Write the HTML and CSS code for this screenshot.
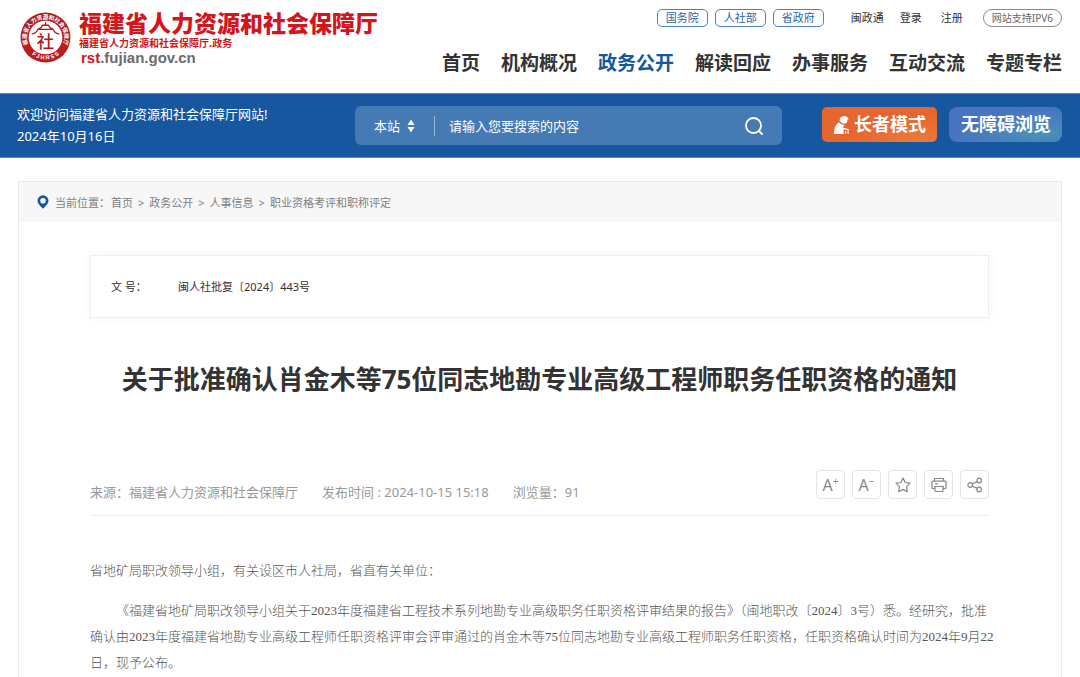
FILE: index.html
```html
<!DOCTYPE html>
<html lang="zh-CN">
<head>
<meta charset="utf-8">
<meta name="viewport" content="width=device-width, initial-scale=1">
<title>福建省人力资源和社会保障厅</title>
<link rel="stylesheet" href="styles.css">
</head>
<body>
<header class="site-header">
  <a class="brand" href="#">
    <svg class="emblem" viewBox="0 0 100 100" aria-hidden="true">
      <defs>
        <radialGradient id="seal" cx="50%" cy="70%" r="70%">
          <stop offset="0" stop-color="#d0141b"/>
          <stop offset="1" stop-color="#a3262a"/>
        </radialGradient>
        <path id="arc-top" d="M14.500 61A37 37 0 1 1 85.500 61"/>
        <path id="arc-bottom" d="M9 63A43 43 0 0 0 91 63"/>
      </defs>
      <circle cx="50" cy="50" r="49" fill="url(#seal)"/>
      <circle cx="50" cy="50" r="33" fill="#fff"/>
      <text class="seal-cn"><textPath href="#arc-top" startOffset="50%" text-anchor="middle">福建省人力资源和社会保障厅</textPath></text>
      <text class="seal-en"><textPath href="#arc-bottom" startOffset="50%" text-anchor="middle">F J H R S S</textPath></text>
      <g fill="none" stroke="#b5161c" stroke-width="2.500" stroke-linecap="round" stroke-linejoin="round">
        <path d="M24 43Q32 42 35 34H65Q68 42 76 43M35 34Q43 31 44 26H56Q57 31 65 34M50 21V26"/>
      </g>
      <text class="seal-mark" x="50" y="71" text-anchor="middle">社</text>
    </svg>
    <span class="brand-text">
      <span class="brand-name">福建省人力资源和社会保障厅</span>
      <span class="brand-sub">福建省人力资源和社会保障厅.政务</span>
      <span class="brand-url"><b>rst</b>.fujian.gov.cn</span>
    </span>
  </a>
  <div class="header-right">
    <div class="top-links">
      <div class="pills">
        <a class="pill" href="#">国务院</a>
        <a class="pill" href="#">人社部</a>
        <a class="pill" href="#">省政府</a>
      </div>
      <div class="account">
        <a href="#">闽政通</a>
        <a class="login" href="#">登录</a>
        <a href="#">注册</a>
      </div>
      <a class="ipv6" href="#">网站支持IPV6</a>
    </div>
    <nav class="main-nav">
      <a href="#">首页</a>
      <a href="#">机构概况</a>
      <a class="active" href="#">政务公开</a>
      <a href="#">解读回应</a>
      <a href="#">办事服务</a>
      <a href="#">互动交流</a>
      <a href="#">专题专栏</a>
    </nav>
  </div>
</header>

<div class="band">
  <div class="welcome">
    <div>欢迎访问福建省人力资源和社会保障厅网站!</div>
    <div>2024年10月16日</div>
  </div>
  <form class="search">
    <div class="scope">
      <select aria-label="搜索范围"><option>本站</option></select>
      <svg class="scope-arrows" viewBox="0 0 8 14" aria-hidden="true"><path fill="#fff" d="M4 0.500L7.500 6H0.500ZM4 13.500L0.500 8H7.500Z"/></svg>
    </div>
    <input type="text" placeholder="请输入您要搜索的内容" aria-label="搜索内容">
    <button class="search-go" type="button" aria-label="搜索">
      <svg viewBox="0 0 20 20" aria-hidden="true"><g fill="none" stroke="#fff" stroke-width="1.800" stroke-linecap="round"><circle cx="9.500" cy="9.500" r="7.500"/><path d="M15 15L18 18"/></g></svg>
    </button>
  </form>
  <div class="modes">
    <button class="mode elder" type="button">
      <svg viewBox="0 0 14 17" aria-hidden="true">
        <g fill="#fff"><path d="M5.200 4.500Q5.200 0.300 9.500 0Q12.500 0 13 1.800L14 3L12.500 3.300Q12.800 6.800 9.800 7.300Q7 7.200 5.200 4.500Z"/><path d="M4.500 5.800Q6.500 8.300 9.800 8.600L8.200 10.800L12.500 12L12.300 13.200L9 12.500V17H0Q-0.500 9.500 4.500 5.800Z"/></g>
        <path d="M10.800 16.500V14.500M13.200 17V12.800L11.500 12.500" fill="none" stroke="#fff" stroke-width="1"/>
      </svg>长者模式</button>
    <button class="mode access" type="button">无障碍浏览</button>
  </div>
</div>

<main class="page">
  <nav class="crumbs" aria-label="当前位置">
    <svg viewBox="0 0 12 14" aria-hidden="true"><path fill="#1558a2" fill-rule="evenodd" d="M6 0.300A5.500 5.500 0 0 1 11.500 5.800Q11.500 9 6 13.700Q0.500 9 0.500 5.800A5.500 5.500 0 0 1 6 0.300ZM6 3A2.800 2.800 0 1 0 6 8.600A2.800 2.800 0 1 0 6 3Z"/></svg>
    <span class="crumb-label">当前位置：</span>
    <a href="#">首页</a><span>&gt;</span><a href="#">政务公开</a><span>&gt;</span><a href="#">人事信息</a><span>&gt;</span><a href="#">职业资格考评和职称评定</a>
  </nav>
  <article class="article">
    <dl class="doc-no">
      <dt>文 号：</dt>
      <dd>闽人社批复〔2024〕443号</dd>
    </dl>
    <h1>关于批准确认肖金木等75位同志地勘专业高级工程师职务任职资格的通知</h1>
    <div class="meta">
      <div class="meta-text">
        <span>来源：福建省人力资源和社会保障厅</span>
        <span>发布时间 : 2024-10-15 15:18</span>
        <span>浏览量：91</span>
      </div>
      <div class="tools">
        <button type="button" aria-label="放大字号"><span class="letter">A<sup>+</sup></span></button>
        <button type="button" aria-label="缩小字号"><span class="letter">A<sup>−</sup></span></button>
        <button type="button" aria-label="收藏"><svg viewBox="0 0 16 16"><path d="M8 1L10.200 5.500L15 6.200L11.500 9.700L12.300 14.700L8 12.400L3.700 14.700L4.500 9.700L1 6.200L5.800 5.500Z"/></svg></button>
        <button type="button" aria-label="打印"><svg viewBox="0 0 16 16"><path d="M3.500 4V1.500H12.500V4M3.500 11.500H1.500Q1 11.500 1 11V5Q1 4.200 1.800 4.200H14.200Q15 4.200 15 5V11Q15 11.500 14.500 11.500H12.500M3 9.500H13M4 9.500V13.500Q4 14.500 5 14.500H11Q12 14.500 12 13.500V9.500M4 6.800H7"/></svg></button>
        <button type="button" aria-label="分享"><svg viewBox="0 0 16 16"><circle cx="3.200" cy="8" r="2.300"/><circle cx="12.200" cy="3.500" r="2.300"/><circle cx="12.200" cy="12.500" r="2.300"/><path d="M5.300 7L10.100 4.600M5.300 9L10.100 11.400"/></svg></button>
      </div>
    </div>
    <div class="content">
      <p>省地矿局职改领导小组，有关设区市人社局，省直有关单位：</p>
      <p class="indent">《福建省地矿局职改领导小组关于2023年度福建省工程技术系列地勘专业高级职务任职资格评审结果的报告》（闽地职改〔2024〕3号）悉。经研究，批准确认由2023年度福建省地勘专业高级工程师任职资格评审会评审通过的肖金木等75位同志地勘专业高级工程师职务任职资格，任职资格确认时间为2024年9月22日，现予公布。</p>
    </div>
  </article>
</main>
</body>
</html>
```
FILE: styles.css
```css
* { box-sizing: border-box; }

body {
  margin: 0;
  min-height: 100vh;
  display: flex;
  flex-direction: column;
  background: #fff;
  color: #333;
  font-family: "Noto Sans", "Noto Sans CJK SC", sans-serif;
  font-size: 13px;
}

a { color: inherit; text-decoration: none; }
button, input, select { font: inherit; color: inherit; margin: 0; padding: 0; border: 0; background: none; }
button { cursor: pointer; }
svg { display: block; }

/* Header */
.site-header {
  display: flex;
  justify-content: space-between;
  padding: 8px 18px 0;
  height: 93px;
}
.brand { display: flex; gap: 8px; padding-left: 2px; }
.emblem { width: 51px; height: 51px; margin-top: 4px; }
.seal-cn { font-size: 11px; font-weight: 700; fill: #fff; }
.seal-en { font-family: "Liberation Sans", sans-serif; font-size: 11px; font-weight: 700; fill: #fff; }
.seal-mark { font-size: 34px; font-weight: 500; fill: #b5161c; }
.brand-text { display: flex; flex-direction: column; color: #d2161b; white-space: nowrap; }
.brand-name { font-family: "Noto Sans CJK SC", sans-serif; font-size: 23px; font-weight: 900; line-height: 28px; }
.brand-sub { font-family: "Noto Sans CJK SC", sans-serif; font-size: 10px; font-weight: 700; line-height: 14px; }
.brand-url { padding-left: 2px; font-family: "Liberation Sans", sans-serif; font-size: 15px; font-weight: 700; line-height: 16px; color: #6b6b6b; }
.brand-url b { color: #d2161b; }

.header-right { display: flex; flex-direction: column; align-items: flex-end; padding-top: 1px; }
.top-links { display: flex; align-items: center; font-size: 11px; line-height: 16px; }
.pills { display: flex; gap: 7px; }
.pill { padding: 0 8px; border: 1px solid #4f80b9; border-radius: 5px; color: #2b64a8; }
.account { display: flex; gap: 16px; margin: 0 20px 0 27px; }
.login { margin-right: 3px; }
.ipv6 { padding: 0 8px; border: 1px solid #8a8a8a; border-radius: 9px; font-size: 10px; color: #666; }
.main-nav { display: flex; gap: 21px; margin-top: 23px; font-size: 19px; font-weight: 700; line-height: 26px; white-space: nowrap; }
.main-nav .active { color: #1558a2; }

/* Search band */
.band {
  display: flex;
  align-items: center;
  padding: 0 18px 0 17px;
  height: 65px;
  border: solid #5a8abd;
  border-width: 1px 0;
  background: #16579f;
  color: #fff;
}
.welcome { flex: 0 0 338px; padding-bottom: 2px; line-height: 22px; }
.search {
  flex: 1;
  display: flex;
  align-items: center;
  height: 39px;
  border-radius: 6px;
  background: #467ab4;
}
.scope { display: flex; align-items: center; gap: 6px; padding: 0 19px; border-right: 1px solid #9ab7d7; height: 20px; }
.scope select { appearance: none; width: 27px; line-height: 20px; }
.scope-arrows { width: 8px; height: 14px; }
.search input { flex: 1; min-width: 0; padding-left: 14px; outline: 0; }
.search input::placeholder { color: #fff; opacity: 1; }
.search-go { margin-right: 18px; }
.search-go svg { width: 20px; height: 20px; }
.modes { display: flex; gap: 12px; margin-left: 40px; padding-bottom: 2px; }
.mode {
  display: flex;
  align-items: center;
  justify-content: center;
  gap: 5px;
  height: 35px;
  padding: 0 11px 0 12px;
  border-radius: 5px;
  font-size: 18px;
  font-weight: 700;
  line-height: 33px;
  white-space: nowrap;
}
.elder { background: radial-gradient(ellipse at 85% 95%, #e97b38, #e7652f 55%); }
.elder svg { width: 15px; height: 18px; }
.access { border-radius: 8px; background: radial-gradient(ellipse at 80% 75%, #4a91b8, #4874c0 65%); }

/* Page frame */
.page { flex: 1; margin: 23px 18px 0; border: 1px solid #e9e9e9; border-bottom: 0; }
.crumbs { display: flex; align-items: center; height: 40px; padding-left: 18px; background: #f7f7f7; color: #808080; font-size: 11px; white-space: nowrap; }
.crumbs svg { width: 12px; height: 14px; margin-right: 6px; }
.crumbs a + span { margin: 0 5px; }
.crumb-label { margin-right: 1px; }

/* Article */
.article { padding: 33px 72px 0 71px; }
.doc-no {
  display: flex;
  margin: 0;
  padding: 0 20px;
  border: 1px solid #eee;
  box-shadow: 0 0 12px rgba(0, 0, 0, 0.04);
  font-size: 11px;
  line-height: 61px;
}
.doc-no dt { flex: 0 0 67px; }
.doc-no dd { margin: 0; }
h1 { margin: 42px -10px 0; font-size: 26px; line-height: 38px; text-align: center; }
.meta { display: flex; justify-content: space-between; align-items: flex-start; margin-top: 72px; padding-bottom: 11px; border-bottom: 1px solid #eee; color: #999; }
.meta-text { display: flex; gap: 24px; padding-top: 10px; line-height: 24px; }
.tools { display: flex; gap: 7px; }
.tools button { display: flex; align-items: center; justify-content: center; width: 29px; height: 29px; border: 1px solid #e4e4e4; border-radius: 4px; color: #888; }
.tools svg { width: 16px; height: 16px; fill: none; stroke: #888; stroke-width: 1.2; stroke-linejoin: round; }
.letter { display: flex; font-size: 16px; line-height: 20px; }
.letter sup { font-size: 10px; line-height: 12px; }
.content { margin: 42px -6px 0 0; font-family: "Liberation Serif", "Noto Sans CJK SC", serif; font-weight: 300; line-height: 26px; color: #555; }
.content p { margin: 0 0 14px; }
.content p:last-child { margin: 0; }
.indent { text-indent: 2em; }
```
